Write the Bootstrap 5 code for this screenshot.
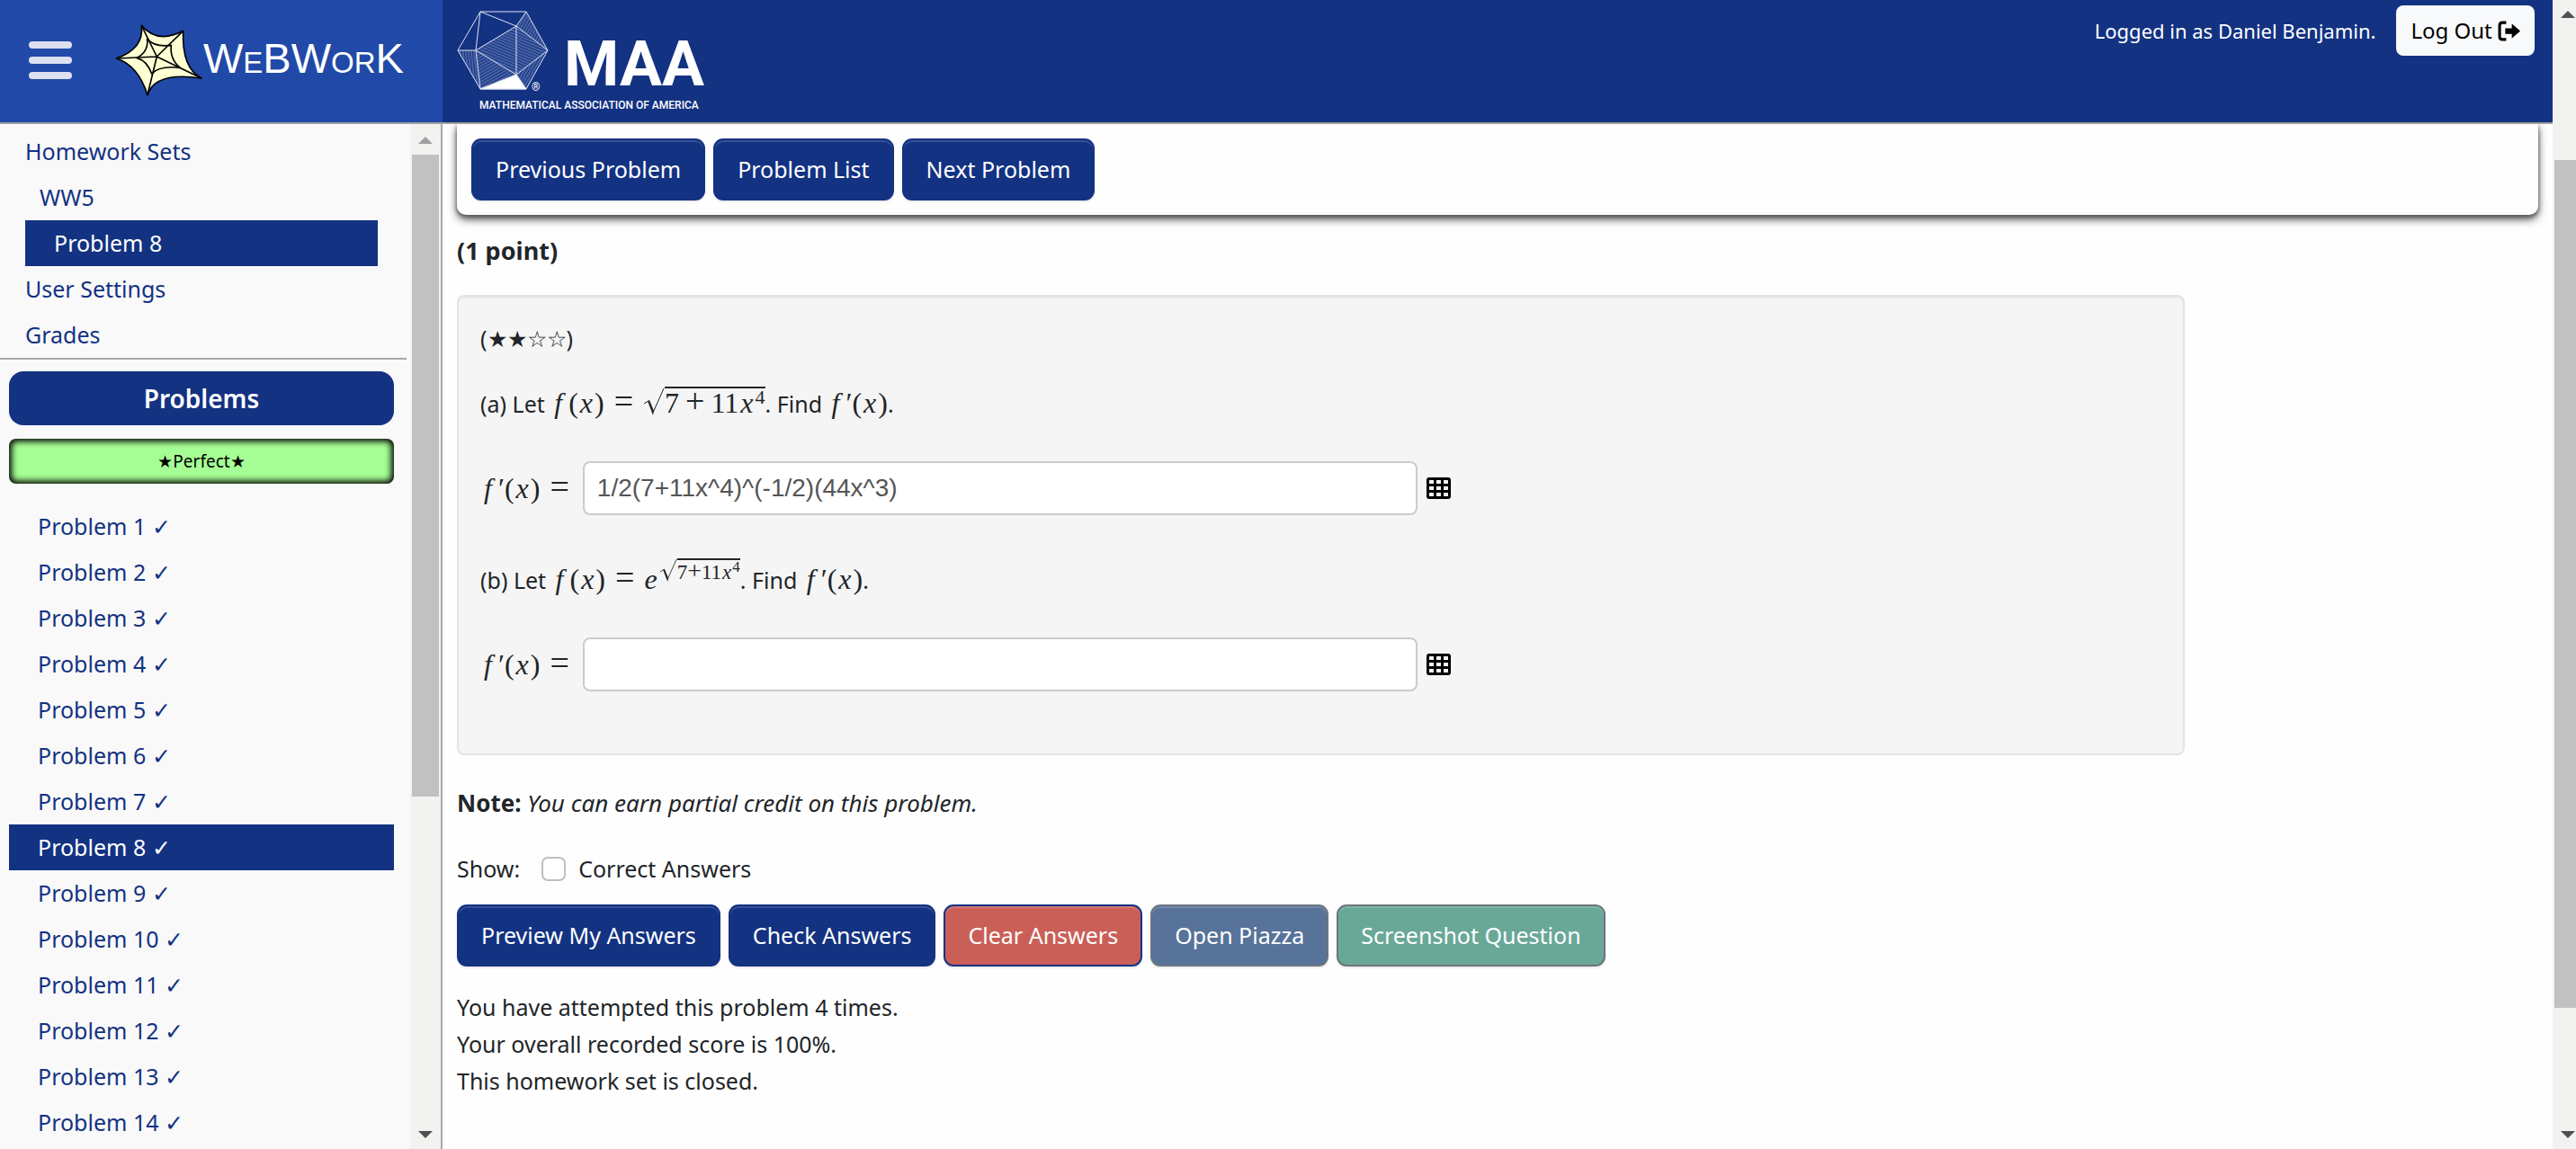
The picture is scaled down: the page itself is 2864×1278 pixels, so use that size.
<!DOCTYPE html>
<html lang="en">
<head>
<meta charset="utf-8">
<meta name="viewport" content="width=device-width, initial-scale=1">
<title>WeBWorK : WW5 : Problem 8</title>
<link href="https://cdn.jsdelivr.net/npm/bootstrap@5.3.0/dist/css/bootstrap.min.css" rel="stylesheet">
<style>
:root { --ww-navy: #133282; --ww-blue: #2149a8; }
body { font-family: "Noto Sans", "Open Sans", sans-serif; font-size: 25px; line-height: 40px; color: #212529; background: #fefefe; }
a { text-decoration: none; color: var(--ww-navy); }

/* masthead */
.masthead { background: var(--ww-navy); border-bottom: 2px solid #a0a0a0; height: 138px; }
.brand-side { width: 492px; background: var(--ww-blue); padding: 0 0 2px 32px; }
.menu-btn { border: 0; background: none; padding: 0; width: 48px; line-height: 0; }
.brand-name { font: 47px/52px "Liberation Sans", sans-serif; font-variant: small-caps; color: #fff; }
.login-area { padding: 6px 20px 0 0; gap: 23px; font-size: 22px; }
.logout-btn { --bs-btn-bg: #f8f9fa; --bs-btn-color: #000; --bs-btn-hover-bg: #e2e6ea; font-size: 24px; line-height: 36px; padding: 8px 14px; border: 2px solid #f8f9fa; border-radius: 8px; }

/* sidebar */
.side-panel { width: 492px; background: #f9f9f9; border-right: 2px solid #a9a9a9; }
.crumbs { padding: 5px 32px 0 28px; margin-right: 4px; border-bottom: 2px solid #a9a9a9; }
.crumbs a, .problem-list a { display: block; line-height: 51px; }
.crumbs .lvl-2 { padding-left: 16px; }
.crumbs .lvl-3 { padding-left: 32px; }
.crumbs .on, .problem-list .on { background: var(--ww-navy); color: #fff; }
.side-body { padding: 13px 18px 0 10px; }
.problem-list { margin-top: 22px; }
.problem-list a { padding-left: 32px; }
.side-title { background: var(--ww-navy); color: #fff; border-radius: 16px; font-size: 28px; font-weight: 600; line-height: 60px; margin: 0 0 15px; text-align: center; }
.score-bar { background: #a5ff94; border-radius: 8px; box-shadow: inset 0 0 7px 3px #000; font-size: 19px; line-height: 50px; color: #000; text-align: center; }

/* scroll tracks */
.track { background: #f2f2f1; fill: #505050; }
.thumb { background: #c1c1c1; }
.track svg { display: block; flex-shrink: 0; }
.page-track { width: 26px; padding: 12px 0 12px 2px; }
.page-track .thumb { margin-top: 158px; }
.page-track svg { margin-left: 7px; }
.side-track { width: 34px; padding: 14px 2px 12px; }
.side-track .thumb { margin-top: 12px; }
.side-track svg { margin-left: 7px; }
.track .idle { fill: #a0a0a0; }

/* main column */
.work-area { padding: 0 16px; }
.toolbar-card { background: #fefefe; border-radius: 0 0 10px 10px; box-shadow: 0 5px 10px #555, 0 2px 4px #777; padding: 16px; }
.btn-row { gap: 9px; }
.ww-btn { --bs-btn-color: #fff; --bs-btn-bg: var(--ww-navy); --bs-btn-border-color: var(--ww-navy); --bs-btn-hover-color: #fff; --bs-btn-hover-bg: var(--ww-blue); border-width: 2px; border-radius: 11px; font-size: 25px; line-height: 41px; padding: 12px 25px; box-shadow: inset 0 2px 0 rgba(255,255,255,.15), 0 2px 2px rgba(0,0,0,.08); }
.ww-red { --bs-btn-bg: #ca5f58; }
.ww-steel { --bs-btn-bg: #577399; --bs-btn-border-color: #6c757d; }
.ww-green { --bs-btn-bg: #69a897; --bs-btn-border-color: #6c757d; }
.points { margin-top: 20px; font-size: 27px; font-weight: 700; }
.problem-box { width: 83%; margin-top: 29px; padding: 26px 24px 69px; background: #f5f5f5; border: 2px solid #e3e3e3; border-radius: 8px; box-shadow: inset 0 2px 2px rgba(0,0,0,.05); }
.prompt-line { height: 40px; margin-top: 33px; white-space: nowrap; }
.answer-row { margin-top: 44px; height: 60px; }
.answer-row + .prompt-line { margin-top: 52px; }
.answer { width: 928px; height: 60px; border: 2px solid #ccc; border-radius: 8px; padding: 0 14px; font: 28px/40px "Liberation Sans", sans-serif; color: #555; margin-left: 15px; }
.pad-btn { border: 0; background: none; padding: 0; margin-left: 10px; line-height: 0; }
.note-line { margin-top: 33px; font-size: 26px; }
.show-row { margin: 33px 0 20px; }
.show-row .form-check-input { width: 27px; height: 27px; margin: 0 14px 0 24px; border: 2px solid #bfbfbf; border-radius: 7px; }
.status-lines { margin-top: 25px; line-height: 41px; }

/* formulas */
.math { font: 32px/36px "Liberation Serif", serif; }
.math i { margin: 0 2px; }
.math .fn { margin: 0 7px 0 4px; }
.math .op { font-size: 38px; line-height: 0; margin: 0 11px; }
.radicand { display: inline-block; border-top: 2px solid #212529; line-height: 32px; }
.math .radicand .op { margin: 0 7px; }
.math .root-sign { vertical-align: -3px; }
.math sup { font-size: 22px; vertical-align: 10px; top: 0; line-height: 0; }
.power { display: inline-block; font-size: 23px; vertical-align: 11px; margin-top: -12px; line-height: 28px; }
.power .radicand { line-height: 28px; }
.math .power .op { margin: 0; font-size: 28px; }
.math .power i { margin: 0 1px; }
.math .power sup { font-size: 17px; vertical-align: 8px; }
</style>
<script src="https://cdn.jsdelivr.net/npm/bootstrap@5.3.0/dist/js/bootstrap.bundle.min.js"></script>
</head>
<body class="vh-100 overflow-hidden d-flex">
<div class="d-flex flex-column flex-grow-1">
  <header class="masthead d-flex flex-shrink-0">
    <div class="brand-side d-flex align-items-center">
      <button class="menu-btn" type="button" aria-label="Toggle menu">
        <svg width="48" height="42" fill="#dde0f0"><rect width="48" height="8" rx="4"/><rect y="17" width="48" height="8" rx="4"/><rect y="34" width="48" height="8" rx="4"/></svg>
      </button>
      <a href="#" class="d-flex align-items-center ms-5">
        <svg width="98" height="80" viewBox="58 48 294 240" stroke="#000" stroke-width="5" fill="none" stroke-linejoin="round">
          <path fill="#ffffd4" d="M146 52Q200 115 285 70Q280 195 346 228Q190 205 166 284Q135 185 62 162Q155 130 146 52Z"/>
          <path d="M197 156L146 52M197 156L285 70M197 156L346 228M197 156L166 284M197 156L62 162"/>
          <path d="M165 97Q190 125 245 118Q240 165 275 193Q205 185 180 213Q165 170 130 160Q170 140 165 97Z"/>
        </svg>
        <span class="brand-name mb-1">WeBWorK</span>
      </a>
    </div>
    <a href="#" aria-label="Mathematical Association of America">
      <svg width="310" height="136" viewBox="492 0 310 136" fill="none" stroke="#dfe4f2" stroke-width="1">
        <defs>
          <pattern id="h1" width="3" height="3" patternUnits="userSpaceOnUse" patternTransform="rotate(22)"><path d="M0 1H3" stroke="#7e92c4"/></pattern>
          <pattern id="h2" width="3" height="3" patternUnits="userSpaceOnUse" patternTransform="rotate(-30)"><path d="M0 1H3" stroke="#7e92c4"/></pattern>
          <pattern id="h3" width="3" height="3" patternUnits="userSpaceOnUse" patternTransform="rotate(84)"><path d="M0 1H3" stroke="#7e92c4"/></pattern>
          <pattern id="h4" width="3" height="3" patternUnits="userSpaceOnUse" patternTransform="rotate(-60)"><path d="M0 1H3" stroke="#7e92c4"/></pattern>
        </defs>
        <path fill="url(#h1)" stroke="none" d="M574 29L529 56L574 83ZM574 29L609 56L574 83Z"/>
        <path fill="url(#h2)" stroke="none" d="M529 56L574 83L534 99Z"/>
        <path fill="url(#h3)" stroke="none" d="M509 56H529L534 99Z"/>
        <path fill="url(#h4)" stroke="none" d="M585 13L574 29L609 56ZM574 83L609 56L585 99Z"/>
        <path d="M534 13H585L609 56L585 99H534L509 56ZM534 13L574 29L585 13M574 29L609 56L574 83ZM534 13L529 56H509M529 56L574 29M529 56L534 99L574 83L585 99M529 56L574 83"/>
        <path fill="#fff" d="M534 99L574 83L585 99Z"/>
        <g fill="#fff" stroke="none" font-family="Roboto, sans-serif">
          <text x="591" y="101" font-size="12">®</text>
          <text x="627" y="95" font-size="70" font-weight="700">MAA</text>
          <text x="533" y="121" font-size="12" font-weight="500">MATHEMATICAL ASSOCIATION OF AMERICA</text>
        </g>
      </svg>
    </a>
    <div class="login-area d-flex align-items-start ms-auto text-white">
      <span class="mt-2">Logged in as Daniel Benjamin.</span>
      <a class="btn logout-btn" href="#">Log Out
        <svg width="25" height="23" viewBox="0 0 24 22" class="mb-1"><path d="M9 2H5Q2 2 2 5V17Q2 20 5 20H9" fill="none" stroke="#000" stroke-width="3"/><path d="M8 8H15V3L24 11L15 19V14H8Z"/></svg>
      </a>
    </div>
  </header>

  <div class="d-flex flex-grow-1 overflow-hidden">
    <aside class="side-panel d-flex flex-shrink-0">
      <div class="flex-grow-1">
        <nav class="crumbs">
          <a href="#">Homework Sets</a>
          <a href="#" class="lvl-2">WW5</a>
          <a href="#" class="lvl-3 on">Problem 8</a>
          <a href="#">User Settings</a>
          <a href="#">Grades</a>
        </nav>
        <div class="side-body">
          <h2 class="side-title">Problems</h2>
          <div class="score-bar">★Perfect★</div>
          <nav class="problem-list">
            <a href="#">Problem 1 ✓</a>
            <a href="#">Problem 2 ✓</a>
            <a href="#">Problem 3 ✓</a>
            <a href="#">Problem 4 ✓</a>
            <a href="#">Problem 5 ✓</a>
            <a href="#">Problem 6 ✓</a>
            <a href="#">Problem 7 ✓</a>
            <a href="#" class="on">Problem 8 ✓</a>
            <a href="#">Problem 9 ✓</a>
            <a href="#">Problem 10 ✓</a>
            <a href="#">Problem 11 ✓</a>
            <a href="#">Problem 12 ✓</a>
            <a href="#">Problem 13 ✓</a>
            <a href="#">Problem 14 ✓</a>
          </nav>
        </div>
      </div>
      <div class="side-track track d-flex flex-column">
        <svg class="idle" width="16" height="8"><path d="M0 8L8 0L16 8Z"/></svg>
        <div class="thumb" style="height:64.1%"></div>
        <svg class="mt-auto" width="16" height="8"><path d="M0 0L8 8L16 0Z"/></svg>
      </div>
    </aside>

    <main class="work-area flex-grow-1">
      <div class="toolbar-card btn-row d-flex">
        <a class="btn ww-btn" href="#">Previous Problem</a>
        <a class="btn ww-btn" href="#">Problem List</a>
        <a class="btn ww-btn" href="#">Next Problem</a>
      </div>
      <div class="points">(1 point)</div>

      <section class="problem-box">
        <div>(★★☆☆)</div>
        <div class="prompt-line">(a) Let <span class="math"><i class="fn">f</i>(<i>x</i>)<span class="op">=</span><svg class="root-sign" width="24" height="31" viewBox="0 0 24 31"><path d="M1 18L6 15L11 28L23 1" fill="none" stroke="#212529" stroke-width="1"/><path d="M5 15L7 14L12 26L11 31Z" fill="#212529"/></svg><span class="radicand">7<span class="op">+</span>11<i>x</i><sup>4</sup></span></span>. Find <span class="math"><i class="fn">f</i>′(<i>x</i>)</span>.</div>
        <div class="answer-row d-flex align-items-center">
          <label class="math" for="ans1"><i class="fn">f</i>′(<i>x</i>)<span class="op me-0">=</span></label>
          <input class="answer" id="ans1" type="text" value="1/2(7+11x^4)^(-1/2)(44x^3)">
          <button class="pad-btn" type="button" aria-label="Equation editor"><svg width="27" height="24" viewBox="0 0 27 24"><path fill-rule="evenodd" d="M3 0H24Q27 0 27 3V21Q27 24 24 24H3Q0 24 0 21V3Q0 0 3 0ZM3 3V7H8V3ZM11 3V7H16V3ZM19 3V7H24V3ZM3 10V14H8V10ZM11 10V14H16V10ZM19 10V14H24V10ZM3 17V21H8V17ZM11 17V21H16V17ZM19 17V21H24V17Z"/></svg></button>
        </div>
        <div class="prompt-line">(b) Let <span class="math"><i class="fn">f</i>(<i>x</i>)<span class="op">=</span><i class="ms-0">e</i><span class="power"><svg class="root-sign" width="20" height="26" viewBox="0 0 24 31"><path d="M1 18L6 15L11 28L23 1" fill="none" stroke="#212529" stroke-width="1"/><path d="M5 15L7 14L12 26L11 31Z" fill="#212529"/></svg><span class="radicand">7<span class="op">+</span>11<i>x</i><sup>4</sup></span></span></span>. Find <span class="math"><i class="fn">f</i>′(<i>x</i>)</span>.</div>
        <div class="answer-row d-flex align-items-center">
          <label class="math" for="ans2"><i class="fn">f</i>′(<i>x</i>)<span class="op me-0">=</span></label>
          <input class="answer" id="ans2" type="text">
          <button class="pad-btn" type="button" aria-label="Equation editor"><svg width="27" height="24" viewBox="0 0 27 24"><path fill-rule="evenodd" d="M3 0H24Q27 0 27 3V21Q27 24 24 24H3Q0 24 0 21V3Q0 0 3 0ZM3 3V7H8V3ZM11 3V7H16V3ZM19 3V7H24V3ZM3 10V14H8V10ZM11 10V14H16V10ZM19 10V14H24V10ZM3 17V21H8V17ZM11 17V21H16V17ZM19 17V21H24V17Z"/></svg></button>
        </div>
      </section>

      <div class="note-line"><b>Note:</b> <i>You can earn partial credit on this problem.</i></div>
      <div class="show-row d-flex align-items-center">Show:<input class="form-check-input" type="checkbox" id="showCorrect"><label for="showCorrect">Correct Answers</label></div>
      <div class="btn-row d-flex">
        <button class="btn ww-btn" type="button">Preview My Answers</button>
        <button class="btn ww-btn" type="button">Check Answers</button>
        <button class="btn ww-btn ww-red" type="button">Clear Answers</button>
        <button class="btn ww-btn ww-steel" type="button">Open Piazza</button>
        <button class="btn ww-btn ww-green" type="button">Screenshot Question</button>
      </div>
      <div class="status-lines">You have attempted this problem 4 times.<br>Your overall recorded score is 100%.<br>This homework set is closed.</div>
    </main>
  </div>
</div>
<div class="page-track track d-flex flex-column flex-shrink-0">
  <svg width="16" height="8"><path d="M0 8L8 0L16 8Z"/></svg>
  <div class="thumb" style="height:75.2%"></div>
  <svg class="mt-auto" width="16" height="8"><path d="M0 0L8 8L16 0Z"/></svg>
</div>
</body>
</html>
